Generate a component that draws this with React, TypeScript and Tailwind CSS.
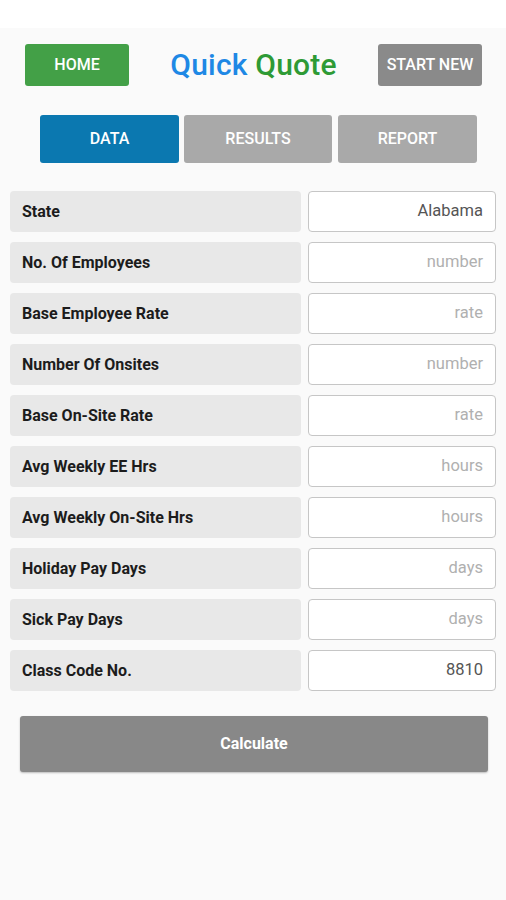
export default function App() {
  const rows = [
    { label: 'State', value: 'Alabama' },
    { label: 'No. Of Employees', placeholder: 'number' },
    { label: 'Base Employee Rate', placeholder: 'rate' },
    { label: 'Number Of Onsites', placeholder: 'number' },
    { label: 'Base On-Site Rate', placeholder: 'rate' },
    { label: 'Avg Weekly EE Hrs', placeholder: 'hours' },
    { label: 'Avg Weekly On-Site Hrs', placeholder: 'hours' },
    { label: 'Holiday Pay Days', placeholder: 'days' },
    { label: 'Sick Pay Days', placeholder: 'days' },
    { label: 'Class Code No.', value: '8810' },
  ];

  return (
    <div className="w-[506px] h-[900px] bg-white font-['Roboto',sans-serif] flex flex-col">
      {/* top strip */}
      <div className="h-[28px] bg-white" />

      <div className="flex-1 bg-[#fafafa] flex flex-col">
        {/* Header */}
        <div className="flex items-center justify-between h-[42px] pr-[24px] pl-[25px] mt-[16px]">
          <button className="w-[104px] h-[42px] rounded-[3px] bg-[#43a047] text-white text-[16px] font-medium">
            HOME
          </button>
          <h1 className="text-[30px] leading-none font-medium tracking-[0.2px]">
            <span className="text-[#1e88e5]">Quick</span>{' '}
            <span className="text-[#2e9a35]">Quote</span>
          </h1>
          <button className="w-[104px] h-[42px] rounded-[3px] bg-[#8a8a8a] text-white text-[16px] font-medium">
            START NEW
          </button>
        </div>

        {/* Tabs */}
        <div className="flex mt-[29px] pl-[40px]">
          <button className="w-[139px] h-[48px] rounded-[3px] bg-[#0b78b0] text-white text-[16px] font-medium">
            DATA
          </button>
          <button className="ml-[5px] w-[148px] h-[48px] rounded-[3px] bg-[#a9a9a9] text-white text-[16px] font-medium">
            RESULTS
          </button>
          <button className="ml-[6px] w-[139px] h-[48px] rounded-[3px] bg-[#a9a9a9] text-white text-[16px] font-medium">
            REPORT
          </button>
        </div>

        {/* Form rows */}
        <div className="flex flex-col gap-[10px] mt-[28px] px-[10px]">
          {rows.map((row, i) => (
            <div key={i} className="flex gap-[7px] h-[41px]">
              <div className="w-[292px] rounded-[4px] bg-[#e8e8e8] flex items-center pl-[12px] text-[16px] font-bold text-[#1c1c1c]">
                {row.label}
              </div>
              <div className="w-[188px] rounded-[4px] border-[1.5px] border-[#c6c6c6] bg-white flex items-center justify-end pr-[12px] text-[16.5px]">
                {row.value ? (
                  <span className="text-[#555555]">{row.value}</span>
                ) : (
                  <span className="text-[#b0b0b0]">{row.placeholder}</span>
                )}
              </div>
            </div>
          ))}
        </div>

        {/* Calculate */}
        <div className="pl-[20px] mt-[25px]">
          <button className="w-[468px] h-[56px] rounded-[3px] bg-[#888888] text-white text-[16px] font-bold shadow-[0_1px_2px_rgba(0,0,0,0.25)]">
            Calculate
          </button>
        </div>
      </div>
    </div>
  );
}
